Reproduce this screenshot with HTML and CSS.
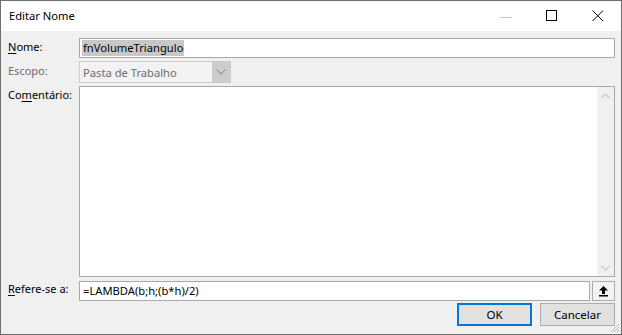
FILE: index.html
```html
<!DOCTYPE html>
<html lang="pt-BR">
<head>
  <meta charset="UTF-8">
  <title>Editar Nome</title>
  <link rel="stylesheet" href="styles.css">
</head>
<body>
  <div class="window">
    <div class="titlebar">
      <span class="title">Editar Nome</span>
      <div class="controls">
        <span class="ctl ctl-min">
          <svg width="12" height="12" viewBox="0 0 12 12"><line x1="0" y1="6.5" x2="12" y2="6.5" stroke="#c4c4c4" stroke-width="1"/></svg>
        </span>
        <span class="ctl">
          <svg width="12" height="12" viewBox="0 0 12 12"><rect x="0.5" y="0.5" width="10" height="10" fill="none" stroke="#000" stroke-width="1"/></svg>
        </span>
        <span class="ctl">
          <svg width="12" height="12" viewBox="0 0 12 12"><path d="M0.5 0.5 L11 11 M11 0.5 L0.5 11" stroke="#000" stroke-width="1" fill="none"/></svg>
        </span>
      </div>
    </div>

    <div class="content">
      <div class="form">
        <label class="lbl"><u>N</u>ome:</label>
        <div class="input"><span class="selected">fnVolumeTriangulo</span></div>

        <label class="lbl lbl-disabled">Escopo:</label>
        <div class="select">
          <span class="select-text">Pasta de Trabalho</span>
          <span class="select-btn">
            <svg width="10" height="6" viewBox="0 0 10 6"><path d="M0.5 0.5 L5 5 L9.5 0.5" stroke="#7a7a7a" stroke-width="1" fill="none"/></svg>
          </span>
        </div>

        <label class="lbl lbl-top">Co<u>m</u>entário:</label>
        <div class="textarea">
          <div class="scrollbar">
            <svg width="9" height="6" viewBox="0 0 9 6"><path d="M0.5 5 L4.5 1 L8.5 5" stroke="#c8c8c8" stroke-width="1.2" fill="none"/></svg>
            <svg width="9" height="6" viewBox="0 0 9 6"><path d="M0.5 1 L4.5 5 L8.5 1" stroke="#c8c8c8" stroke-width="1.2" fill="none"/></svg>
          </div>
        </div>

        <label class="lbl lbl-ref"><u>R</u>efere-se a:</label>
        <div class="ref-row">
          <div class="input ref-input">=LAMBDA(b;h;(b*h)/2)</div>
          <span class="ref-btn">
            <svg width="11" height="12" viewBox="0 0 11 12"><path d="M5.5 1 L10 5.5 L7 5.5 L7 9 L4 9 L4 5.5 L1 5.5 Z" fill="#000"/><rect x="1" y="10" width="9" height="1.5" fill="#000"/></svg>
          </span>
        </div>
      </div>

      <div class="buttons">
        <button class="btn btn-default">OK</button>
        <button class="btn">Cancelar</button>
      </div>

      <svg class="grip" width="10" height="10" viewBox="0 0 10 10">
        <path d="M9 1 L1 9 M9 4 L4 9 M9 7 L7 9" stroke="#b4b4b4" stroke-width="1"/>
      </svg>
    </div>
  </div>
</body>
</html>
```

FILE: styles.css
```css
body {
  margin: 0;
  padding: 0;
  font-family: 'Noto Sans', 'Open Sans', Arial, sans-serif;
  font-size: 11px;
  color: #000;
}
.window {
  position: relative;
  width: 622px;
  height: 335px;
  box-sizing: border-box;
  border: 1px solid #6e6e6e;
  background-color: #f0f0f0;
  display: flex;
  flex-direction: column;
}
.titlebar {
  height: 30px;
  background-color: #fff;
  display: flex;
  align-items: center;
  justify-content: space-between;
  flex-shrink: 0;
}
.title {
  padding-left: 8px;
  font-size: 11.2px;
  padding-bottom: 1px;
}
.controls {
  display: flex;
  height: 100%;
}
.ctl {
  width: 46px;
  display: flex;
  align-items: center;
  justify-content: center;
}
.ctl-min {
  padding-top: 1px;
}
.content {
  flex: 1;
  padding: 7px 6px 7px 6px;
  display: flex;
  flex-direction: column;
}
.form {
  display: grid;
  grid-template-columns: 72px 1fr;
  grid-template-rows: 20px 22px 191px 20px;
  row-gap: 3px;
}
.lbl {
  padding-left: 1px;
  display: flex;
  align-items: center;
  line-height: 14px;
  padding-bottom: 3px;
}
.lbl u {
  text-underline-offset: 2px;
}
.lbl-disabled {
  color: #6d6d6d;
}
.lbl-top {
  align-items: flex-start;
  padding-top: 2px;
}
.lbl-ref {
  margin-top: 1px;
}
.input {
  background-color: #fff;
  border: 1px solid #a8a8a8;
  box-sizing: border-box;
  height: 20px;
  display: flex;
  align-items: center;
  padding-left: 2px;
  line-height: 14px;
  font-size: 11.2px;
}
.selected {
  background-color: #c8c8c8;
  padding: 0 1px;
  line-height: 16px;
}
.select {
  width: 152px;
  height: 22px;
  box-sizing: border-box;
  border: 1px solid #cccccc;
  background-color: #f2f2f2;
  display: flex;
  align-items: center;
  justify-content: space-between;
  font-size: 11.2px;
}
.select-text {
  color: #6d6d6d;
  padding-left: 3px;
}
.select-btn {
  width: 18px;
  height: 20px;
  background-color: #cccccc;
  display: flex;
  align-items: center;
  justify-content: center;
}
.textarea {
  background-color: #fff;
  border: 1px solid #a8a8a8;
  box-sizing: border-box;
  display: flex;
  justify-content: flex-end;
}
.scrollbar {
  width: 17px;
  background-color: #f0f0f0;
  display: flex;
  flex-direction: column;
  justify-content: space-between;
  align-items: center;
  padding: 6px 0 5px 0;
}
.ref-row {
  display: flex;
  gap: 2px;
  margin-top: 1px;
}
.ref-input {
  flex: 1;
  padding-left: 3px;
}
.ref-btn {
  width: 23px;
  height: 20px;
  box-sizing: border-box;
  border: 1px solid #adadad;
  background-color: #f3f3f3;
  display: flex;
  align-items: center;
  justify-content: center;
}
.buttons {
  display: flex;
  justify-content: flex-end;
  gap: 8px;
  margin-top: 3px;
}
.btn {
  width: 75px;
  height: 23px;
  box-sizing: border-box;
  border: 1px solid #adadad;
  background-color: #e1e1e1;
  font-family: inherit;
  font-size: 11.5px;
  color: #000;
  padding: 0 0 1px 0;
}
.btn-default {
  border: 2px solid #0078d7;
}
.grip {
  position: absolute;
  right: 1px;
  bottom: 1px;
}
```
